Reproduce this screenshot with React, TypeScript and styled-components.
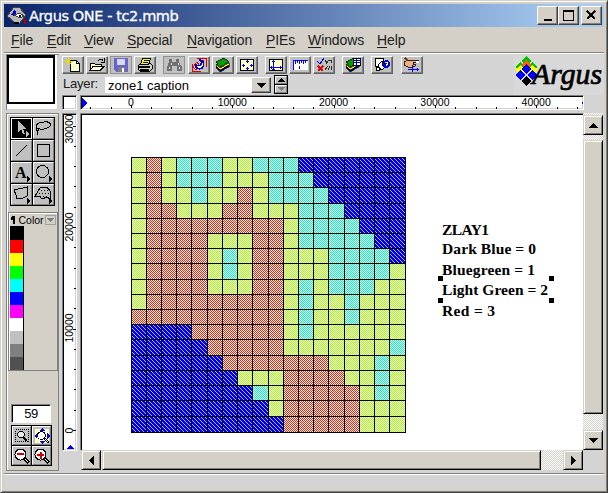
import React from 'react';
import styled, { createGlobalStyle, css } from 'styled-components';

const Global = createGlobalStyle`
  * { box-sizing: border-box; }
  body { margin: 0; background: #d4d0c8; font-family: "Liberation Sans", Arial, sans-serif; color: #000; overflow: hidden; }
  svg { display: block; shape-rendering: crispEdges; flex: none; }
`;

const raised = css`
  border: 1px solid;
  border-color: #fff #404040 #404040 #fff;
  box-shadow: inset -1px -1px #808080;
`;

const Frame = styled.div`
  width: 608px; height: 493px; background: #d4d0c8;
  border: 1px solid; border-color: #d4d0c8 #404040 #404040 #d4d0c8;
  box-shadow: inset 1px 1px #fff, inset -1px -1px #808080;
  padding: 3px; display: flex; flex-direction: column;
`;
const TitleBar = styled.div`
  height: 23px; flex: none; display: flex; align-items: center; padding: 0 2px 0 3px;
  background: linear-gradient(90deg, #0a246a, #a6caf0 94%);
`;
const Title = styled.span`
  flex: 1; margin-left: 2px; color: #fff; font: 14.5px "DejaVu Sans", sans-serif; line-height: 22px;
  letter-spacing: -0.4px; -webkit-text-stroke: 0.3px #fff; white-space: nowrap;
`;
const CaptionButton = styled.div<{ $gap?: number }>`
  ${raised} width: 21px; height: 19px; background: #d4d0c8; margin-left: ${p => p.$gap ?? 0}px;
  display: flex; align-items: center; justify-content: center;
`;
const MenuBar = styled.div`
  height: 25px; flex: none; font-size: 14px; line-height: 27px;
  display: flex; padding-left: 7px; gap: 14px;
`;
const MenuItem = styled.span<{ $w: number }>`
  width: ${p => p.$w}px; flex: none; white-space: nowrap; color: #202020; letter-spacing: -0.1px;
  u { text-underline-offset: 2px; }
`;
const Rule = styled.div`height: 2px; flex: none; background: #fff; border-top: 1px solid #808080;`;
const StatusBar = styled.div`flex: 1; background: #d4d4d4;`;
const Workspace = styled.div`height: 419px; flex: none; display: flex; background: #d4d4d4;`;
const SideColumn = styled.div`width: 58px; flex: none; padding-left: 2px;`;
const Preview = styled.div`
  width: 53px; height: 56px; background: #d4d0c8;
  border-left: 1px solid #808080; border-top: 1px solid #808080;
`;
const PreviewPaper = styled.div`width: 50px; height: 54px; background: #fff;`;
const PreviewPage = styled.div`width: 48px; height: 49px; border: 2px solid #000; border-top-width: 3px; background: #fff;`;
const SidePanel = styled.div`
  width: 53px; height: 358px; margin-top: 3px; background: #d4d0c8;
  border: 1px solid #808080; box-shadow: inset 1px 1px #fff;
  display: flex; flex-direction: column; align-items: flex-start; padding: 3px 0 0 3px;
`;
const ButtonGrid = styled.div<{ $cell: number; $top?: number; $left?: number }>`
  display: grid; grid-template-columns: repeat(2, ${p => p.$cell}px); grid-auto-rows: ${p => p.$cell}px;
  gap: 1px; padding: 1px; background: #000; margin: ${p => p.$top ?? 0}px 0 0 ${p => p.$left ?? 0}px;
`;
const Tool = styled.div<{ $on?: boolean }>`
  background: ${p => (p.$on ? '#000' : '#c0c0c0')}; overflow: hidden;
  border: 1px solid; border-color: ${p => (p.$on ? '#fff' : '#fff #808080 #808080 #fff')};
  display: flex; align-items: center; justify-content: center;
`;
const ColorPanel = styled.div`
  width: 50px; height: 159px; margin: 6px 0 0 -2px; border: 1px solid #808080; box-shadow: inset 1px 1px #fff;
  padding: 1px;
`;
const ColorHead = styled.div`
  height: 12px; display: flex; align-items: center; justify-content: space-between;
  font-size: 10.5px; line-height: 11px; padding-left: 1px;
`;
const Arrow = styled.div`
  width: 11px; height: 10px; background: #d4d0c8; border: 1px solid #a0a0a0; display: flex; align-items: center; justify-content: center;
`;
const Swatches = styled.div`width: 14px; border-right: 1px solid #000; border-top: 1px solid #000;`;
const Swatch = styled.div<{ $c: string }>`height: 13px; background: ${p => p.$c};`;
const ZoomValue = styled.div`
  width: 40px; height: 19px; margin: 33px 0 0 1px; background: #fff; border: 1px solid;
  border-color: #808080 #fff #fff #808080; box-shadow: inset 1px 1px #000;
  font-size: 13px; line-height: 18px; text-align: center; letter-spacing: -0.5px;
`;
const Main = styled.div`width: 542px; flex: none; display: flex; flex-direction: column;`;
const Top = styled.div`display: flex; height: 41px; flex: none;`;
const Controls = styled.div`width: 451px; flex: none;`;
const Toolbar = styled.div`display: flex; padding-top: 2px; height: 21px;`;
const TBtn = styled.div<{ $gap: number; $off?: boolean }>`
  width: 22px; height: 18px; margin-left: ${p => p.$gap}px; background: #c0c0c0;
  border: 1px solid; border-color: ${p => (p.$off ? '#909090' : '#fff #606060 #606060 #fff')};
  box-shadow: ${p => (p.$off ? 'none' : 'inset -1px -1px #808080')};
  display: flex; align-items: center; justify-content: center;
`;
const LayerRow = styled.div`display: flex; height: 20px; font-size: 13px;`;
const LayerLabel = styled.span`width: 43px; padding-left: 1px; line-height: 17px; letter-spacing: -0.2px; color: #202020;`;
const Combo = styled.div`
  width: 166px; height: 16px; margin-top: 2px; background: #fff; display: flex; justify-content: space-between;
  padding-left: 3px; line-height: 17px; letter-spacing: 0; white-space: nowrap;
`;
const DropButton = styled.div`
  ${raised} width: 20px; height: 16px; background: #d4d0c8; display: flex; align-items: center; justify-content: center;
`;
const Spinner = styled.div`
  width: 14px; height: 19px; margin-left: 3px; background: #000; padding: 1px; display: flex; flex-direction: column; gap: 1px;
`;
const SpinButton = styled.div`
  flex: 1; background: #c0c0c0; border: 1px solid; border-color: #fff #808080 #808080 #fff;
  display: flex; align-items: center; justify-content: center;
`;
const RulerRow = styled.div`display: flex; height: 18px; flex: none;`;
const Sunken = styled.div<{ $w: number; $h: number; $mr?: number }>`
  width: ${p => p.$w}px; height: ${p => p.$h}px; margin-right: ${p => p.$mr ?? 0}px; flex: none;
  background: #fff; border: 1px solid; border-color: #808080 #fff #fff #808080; box-shadow: inset 1px 1px #000, inset -1px -1px #d4d0c8;
  overflow: hidden;
`;
const Body = styled.div`display: flex;`;
const Center = styled.div`width: 503px; flex: none;`;
const Canvas = styled.div`
  width: 503px; height: 337px; background: #fff; border: 1px solid #808080; border-right: 0; border-bottom: 0;
  box-shadow: inset 1px 1px #000;
`;
const Track = styled.div<{ $v?: boolean }>`
  display: flex; flex-direction: ${p => (p.$v ? 'column' : 'row')};
  width: ${p => (p.$v ? 20 : 502)}px; height: ${p => (p.$v ? 337 : 20)}px;
  margin: ${p => (p.$v ? '0' : '0 0 0 1px')}; padding: ${p => (p.$v ? '2px 0 0' : '0')};
  background: repeating-conic-gradient(#fff 0 25%, #d4d0c8 0 50%) 0 0 / 2px 2px;
`;
const ScrollButton = styled.div`
  width: 20px; height: 20px; flex: none; background: #d4d0c8; border: 1px solid; border-color: #d4d0c8 #000 #000 #d4d0c8;
  box-shadow: inset 1px 1px #fff, inset -1px -1px #808080; display: flex; align-items: center; justify-content: center;
`;
const Thumb = styled(ScrollButton)<{ $w?: number; $h?: number; $lead: number; $tail: number; $v?: boolean }>`
  width: ${p => p.$w ?? 20}px; height: ${p => p.$h ?? 20}px;
  margin: ${p => (p.$v ? `${p.$lead}px 0 ${p.$tail}px` : `0 ${p.$tail}px 0 ${p.$lead}px`)};
`;

const Tri = ({ d, w = 9, h = 5, c = '#000' }: { d: string; w?: number; h?: number; c?: string }) => (
  <svg width={w} height={h}><path d={d} fill={c} /></svg>
);
const DOWN = 'M0 0h9v1h-1v1h-1v1h-1v1h-1v1h-1v-1h-1v-1h-1v-1h-1v-1h-1z';
const UP = 'M4 0h1v1h1v1h1v1h1v1h1v1h-9v-1h1v-1h1v-1h1v-1h1z';

const Books = () => (
  <>
    <path d="M1 9l4 4 9-5v2l-9 5-4-4z" fill="#000080" stroke="#000" strokeWidth=".6" />
    <path d="M1 7l4 4 9-5v2l-9 5-4-4z" fill="#ff0" stroke="#000" strokeWidth=".6" />
    <path d="M1 5l8-4 5 4-9 5z" fill="#00a000" stroke="#000" strokeWidth=".8" />
  </>
);
const Board = () => <path d="M1.5 2.5h13v11h-13z" fill="#ffffc8" stroke="#000" />;
const icons: Record<string, React.ReactNode> = {
  new: <><path d="M5.5 3.5h6l3 3v8h-9z" fill="#ffffd0" stroke="#000" /><path d="M11.5 3.5v3h3" fill="none" stroke="#000" /><path d="M3.5 0v8M0 4.5h8M1 2l5 5M6 2L1 7" stroke="#e8e000" /></>,
  open: <><path d="M1.5 13.5v-7h4l1 1h6v2" fill="#ffffd0" stroke="#000" /><path d="M1 13.5l3-4h11l-4 4z" fill="#ffffd0" stroke="#000" /><path d="M9 4c2-3 4-2 5 0M15.5 1v4h-4" fill="none" stroke="#000" /></>,
  save: <><path d="M1 1h14v14H3l-2-2z" fill="#6464d0" /><path d="M4 2h8v6H4z" fill="#d8d8f0" /><path d="M5 10h7v5H5z" fill="#808080" /><path d="M9 11h2v4h-2z" fill="#fff" /></>,
  print: <><path d="M1.5 8.5l3-2h9l2 2v3l-3 3h-9l-2-2z" fill="#d0d0d0" stroke="#000" /><path d="M5.5 1.5h8l-2 6h-8z" fill="#ff0" stroke="#000" /><path d="M7 3.5h5M6 5.5h5" stroke="#0000c0" /><path d="M2 10h11M3 13h9" stroke="#000" strokeWidth="2" /><path d="M9 11h3" stroke="#ff0" /></>,
  find: <><path d="M3 2h3v3h4V2h3v3l3 5v4h-5V9H6v5H1v-4l2-5z" fill="#707070" /><path d="M5 6v2M12 6v2M3 10v2M13 10v2" stroke="#e0e0e0" /></>,
  link: <><path d="M6 1.5h9v8M1.5 7v7h8" fill="none" stroke="#e00000" /><path d="M2 10l4-5 3 4-4 4zM8 3l5 1-1 6" fill="#fff" stroke="#e00000" /><path d="M5 8c-1 3 3 5 6 3 3-3 2-7-2-8 3 4 1 7-4 5z" fill="#fff" stroke="#0000c0" strokeWidth="1.5" /></>,
  books: <Books />,
  fit: <><Board /><path d="M8.5 3v3M8.5 10v3M3 8.5h3M11 8.5h3M7 4.5h3M7 11.5h3M4.5 7v3M12.5 7v3" stroke="#00f" /></>,
  axes: <><Board /><path d="M5.5 3v10M2 10.5h12M4 4.5h3M4 12.5h3M3.5 9v3M12.5 9v3" stroke="#00f" /></>,
  scale: <><path d="M1 3h15v10H1z" fill="#fff" /><path d="M1 3.5h15M3.5 4v3M5.5 4v2M7.5 4v3M9.5 4v2M11.5 4v3M13.5 4v2M1.5 4v9M7.5 9v3" stroke="#00f" /></>,
  check: <><path d="M1 4l3 3 4-6" fill="none" stroke="#0000d0" /><path d="M2 9l5 5M7 9l-5 5" stroke="#e00000" strokeWidth="1.5" /><path d="M9 3l2 3M13 3l-3 4M13 3h2v3M9 13l3-4M12 13l2-4M15 9v4" fill="none" stroke="#303030" /></>,
  layers: <><Books /><path d="M8.5 1.5h7v7h-7z" fill="#fff" stroke="#000" /><path d="M8 3.5h8M8 5.5h8M11.5 2v7" stroke="#00a" /></>,
  query: <><path d="M1.5 1.5h8v8h-8z" fill="#fff" stroke="#000" /><path d="M4 8l4-4 4 6-5 3z" fill="#fff" stroke="#000" /><path d="M8 6l3-3h3l2 3v3l-3 2h-3l-2-2z" fill="#0000d0" /><path d="M11 5h2v2h-1v2" stroke="#fff" fill="none" /><circle cx="4" cy="12" r="2" fill="#fff" stroke="#000" /></>,
  point: <><path d="M0 5l4-2h10v2H9v2h2v2H9v1H4L0 8z" fill="#f0b080" stroke="#000" strokeWidth=".8" /><path d="M8.5 8v7M4 12.5h11M13.5 11v3" stroke="#00f" /><path d="M1 1l3 3" stroke="#704000" strokeWidth="2" /><path d="M12 4h3v2h-3z" fill="#fff" /></>,
};
const toolbar: [string, number, boolean?][] = [
  ['new', 0], ['open', 2], ['save', 2, true], ['print', 2], ['find', 7, true], ['link', 3], ['books', 2], ['fit', 2],
  ['axes', 7], ['scale', 2], ['check', 2], ['layers', 7], ['query', 7], ['point', 8],
];
const Corner = () => <path d="M15 13v6l3-3z" />;
const tools = [
  <><path d="M6 2v11l3-3 2 5h2l-2-5h3z" fill="#c0c0c0" /><path d="M14 12v6l4-3z" fill="#c0c0c0" /></>,
  <><path d="M3 9c-2-4 2-6 7-6 8-1 8 4 3 6-4 2-8 1-10 0-2 2 2 4 2 2-1-2-3-1-2 1v4" fill="none" stroke="#000" /></>,
  <path d="M4 15L15 4" stroke="#000" />,
  <path d="M3.5 3.5h12v12h-12z" fill="none" stroke="#000" />,
  <><text x="3" y="15" fontSize="16" fontWeight="bold" fontFamily="Liberation Serif">A</text><Corner /></>,
  <><circle cx="8.5" cy="8.5" r="6" fill="none" stroke="#000" /><Corner /></>,
  <><path d="M2 5l13-3v9l-4 2-7 1v-4z" fill="none" stroke="#000" /><Corner /></>,
  <><path d="M1 11l5-8 7-1 3 4v8l-3-2-5 2-3-3z" fill="none" stroke="#000" /><path d="M7 5.5h8M5 8.5h10M6 11.5h9" stroke="#000" strokeDasharray="1 2" /><Corner /></>,
];
const Lens = ({ sign }: { sign: string }) => (
  <><path d="M11 11l5 5" stroke="#000" strokeWidth="3" /><path d="M11 11l4 4" stroke="#fff" /><circle cx="7.5" cy="7.5" r="5.5" fill="#fff" stroke="#000" /><path d={sign} stroke="#d00000" strokeWidth="2" /></>
);
const zooms = [
  <><path d="M2.5 2.5h13v12h-13z" fill="none" stroke="#000" strokeDasharray="1 1" /><circle cx="8" cy="7.5" r="3.2" fill="#e8e8e8" stroke="#000" /><path d="M10 10l4 4" stroke="#000" strokeWidth="2" /></>,
  <><path d="M2 2h14v14H2z" fill="#ffffc8" /><path d="M9 1l3 3H6zM9 17l3-3H6zM1 9l3-3v6zM17 9l-3-3v6z" fill="#00f" /><circle cx="8.5" cy="8.5" r="4" fill="#fff" stroke="#000" /><path d="M11 11l5 5" stroke="#000" strokeWidth="2.5" /><path d="M12 12l3 3" stroke="#fff" /></>,
  <Lens sign="M4 7h7" />,
  <Lens sign="M4 8h7M8 4.5v7" />,
];
const palette = ['#000', '#f00', '#ff0', '#0f0', '#0ff', '#00f', '#f0f', '#fff', '#c0c0c0', '#808080', '#505050'];

const rows = [
  'GRGTTTGGTTTBBBBBBB', 'GRGTTTGGGTTTBBBBBB', 'GRGGTGGRGTTTTBBBBB', 'GRRGGGRRGGGTTTBBBB',
  'GRRRRRRRRRGTTTTBBB', 'GRRRRGGGRRGTTTTTBB', 'GRRRRGTGRRGGGTTTTB', 'GRRRRGTGRRGGGTTTTG',
  'GRRRRGGGRRGTGTTTGG', 'GRRRRRRRRRGTGGTGGG', 'RRRRRRRRRRGTGGTGGG', 'BBBBRRRRRRGTGGGGGG',
  'BBBBBRRRRRGGGGGGGT', 'BBBBBBRRRRRRRGGGTG', 'BBBBBBBGGGRRRRGGTG', 'BBBBBBBBTGRRRRRGTG',
  'BBBBBBBBBGRRRRRGGG', 'BBBBBBBBBBRRRRRGGG',
];
const colEdges = [131, 146, 161, 176, 191, 207, 222, 237, 252, 268, 283, 298, 313, 328, 344, 359, 374, 389, 405];
const rowEdges = [157, 172, 187, 203, 218, 233, 248, 263, 279, 294, 309, 324, 339, 355, 370, 385, 400, 416, 432];
const zones: Record<string, string> = { G: '#a0ff00', R: '#ff2000', T: '#00ffb0' };
const captions: [string, number, number][] = [
  ['ZLAY1', 235, 47], ['Dark Blue = 0', 254, 94], ['Bluegreen = 1', 275, 93], ['Light Green = 2', 295, 106], ['Red = 3', 316, 53],
];

// The drawing uses window coordinates, so the view box starts at the canvas corner.
const Drawing = () => (
  <svg width="502" height="335" viewBox="81 114 502 335">
    <defs>
      {Object.entries(zones).map(([k, c]) => (
        <pattern key={k} id={`z${k}`} width="2" height="2" patternUnits="userSpaceOnUse">
          <path d="M0 0h2v2h-2z" fill="#fff" /><path d="M0 0h1v1h-1zM1 1h1v1h-1z" fill={c} />
        </pattern>
      ))}
      <pattern id="zB" width="4" height="4" patternUnits="userSpaceOnUse">
        <path d="M0 0h4v4h-4z" fill="#0000e8" />
        <path d="M0 0h1v1h-1zM1 1h1v1h-1zM2 2h1v1h-1zM3 3h1v1h-1z" fill="#b8b8ff" />
      </pattern>
    </defs>
    {rows.map((r, y) => [...r].map((z, x) => (
      <rect key={`${x}-${y}`} x={colEdges[x]} y={rowEdges[y]} width={colEdges[x + 1] - colEdges[x]} height={rowEdges[y + 1] - rowEdges[y]} fill={`url(#z${z})`} />
    )))}
    {colEdges.map(x => <rect key={x} x={x} y="157" width="1" height="276" />)}
    {rowEdges.map(y => <rect key={y} x="131" y={y} width="275" height="1" />)}
    <g fontFamily="Liberation Serif, serif" fontSize="15.5" fontWeight="bold">
      {captions.map(([t, y, w]) => <text key={t} x="442" y={y} textLength={w}>{t}</text>)}
    </g>
    {[438, 549].map(x => [276, 298].map(y => <rect key={`${x}${y}`} x={x} y={y} width="5" height="5" />))}
  </svg>
);

const rulerFont = { fontFamily: 'Liberation Sans, sans-serif', fontSize: 10.5 };
const HRuler = () => (
  <svg width="502" height="13" viewBox="81 96 502 13">
    <path d="M82 98l5.5 5-5.5 5zM583 101l-2 2 2 2z" fill="#00f" />
    {Array.from({ length: 25 }, (_, i) => {
      const major = (i - 2) % 5 === 0;
      return <rect key={i} x={Math.round(90.3 + i * 20.28)} y={major ? 105 : 107} width="1" height={major ? 3 : 2} />;
    })}
    {[0, 1, 2, 3, 4].map(i => <text key={i} {...rulerFont} x={131 + i * 101.3} y="106" textAnchor="middle">{i ? i * 10000 : 0}</text>)}
  </svg>
);
const VRuler = () => (
  <svg width="13" height="336" viewBox="63 115 13 336">
    <path d="M67 450l3.5-4 3.5 4z" fill="#00f" />
    {Array.from({ length: 16 }, (_, i) => <rect key={i} x={i % 5 ? 74 : 73} y={Math.round(431 - i * 20.3)} width="3" height="1" />)}
    {[0, 1, 2, 3].map(i => <text key={i} {...rulerFont} textAnchor="middle" transform={`translate(73 ${[431.5, 329, 228, 130][i]}) rotate(-90)`}>{i ? i * 10000 : 0}</text>)}
  </svg>
);

const diamonds: [number, number, string][] = [
  [12, 6, '#00c000'], [6, 12, '#00c000'], [18, 12, '#00c000'], [12, 10, '#ff6000'], [6, 15, '#ff0'], [18, 15, '#ff0'],
  [12, 14, '#0000ff'], [6, 20, '#0000ff'], [18, 20, '#0000ff'], [12, 26, '#000'],
];
const Logo = () => (
  <svg width="90" height="40">
    <rect width="90" height="40" fill="#d8d8d8" />
    {diamonds.map(([x, y, c], i) => <path key={i} d={`M${x} ${y - 5}l5 5-5 5-5-5z`} fill={c} />)}
    <text x="18" y="29" fontFamily="Liberation Serif, serif" fontStyle="italic" fontSize="29" stroke="#000" strokeWidth=".7" textLength="70" lengthAdjust="spacingAndGlyphs">Argus</text>
  </svg>
);
const LogoBox = styled.div`padding-top: 1px; margin-left: 1px;`;

const menus: [string, number][] = [['File', 22], ['Edit', 23], ['View', 29], ['Special', 46], ['Navigation', 65], ['PIEs', 28], ['Windows', 55], ['Help', 29]];

export default function App() {
  return (
    <Frame>
      <Global />
      <TitleBar>
        <svg width="20" height="20">
          <path d="M7 1h5l7 8-7 9-5-2-7-6z" fill="#b8b8b8" stroke="#404040" />
          <path d="M4 9l4-6 2 8z" fill="#0000d0" /><path d="M7 9l6-2 4 3-4 2z" fill="#fff" stroke="#404040" />
          <circle cx="13" cy="10" r="1.5" /><path d="M17 13h2v5h-2z" fill="#b00000" /><path d="M6 16h6v2H7z" />
        </svg>
        <Title>Argus ONE - tc2.mmb</Title>
        <CaptionButton><svg width="14" height="13"><path d="M3 10h8v2H3z" /></svg></CaptionButton>
        <CaptionButton><svg width="13" height="13"><path d="M1 1h11v11H1zM2 3v8h9V3z" fillRule="evenodd" /></svg></CaptionButton>
        <CaptionButton $gap={2}><svg width="11" height="11"><path d="M1 1l8 8M9 1l-8 8" stroke="#000" strokeWidth="2" /></svg></CaptionButton>
      </TitleBar>
      <MenuBar>{menus.map(([m, w]) => <MenuItem key={m} $w={w}><u>{m[0]}</u>{m.slice(1)}</MenuItem>)}</MenuBar>
      <Rule />
      <Workspace>
        <SideColumn>
          <Preview><PreviewPaper><PreviewPage /></PreviewPaper></Preview>
          <SidePanel>
            <ButtonGrid $cell={21}>{tools.map((t, i) => <Tool key={i} $on={i === 0}><svg width="19" height="19">{t}</svg></Tool>)}</ButtonGrid>
            <ColorPanel>
              <ColorHead>
                <svg width="6" height="8"><path d="M1 0h3v8h-2V4H0V1z" /></svg>Color
                <Arrow><Tri w={7} h={4} d="M0 0h7l-3.5 4z" c="#808080" /></Arrow>
              </ColorHead>
              <Swatches>{palette.map(c => <Swatch key={c} $c={c} />)}</Swatches>
            </ColorPanel>
            <ZoomValue>59</ZoomValue>
            <ButtonGrid $cell={19} $top={2} $left={1}>{zooms.map((z, i) => <Tool key={i}><svg width="17" height="17">{z}</svg></Tool>)}</ButtonGrid>
          </SidePanel>
        </SideColumn>
        <Main>
          <Top>
            <Controls>
              <Toolbar>
                {toolbar.map(([n, g, off]) => <TBtn key={n} $gap={g} $off={off}><svg width="17" height="16">{icons[n]}</svg></TBtn>)}
              </Toolbar>
              <LayerRow>
                <LayerLabel>Layer:</LayerLabel>
                <Combo>zone1 caption<DropButton><Tri d={DOWN} /></DropButton></Combo>
                <Spinner>
                  <SpinButton><Tri w={7} h={4} d="M0 4h7L3.5 0z" /></SpinButton>
                  <SpinButton><Tri w={7} h={4} d="M0 0h7L3.5 4z" c="#808080" /></SpinButton>
                </Spinner>
              </LayerRow>
            </Controls>
            <LogoBox><Logo /></LogoBox>
          </Top>
          <RulerRow>
            <Sunken $w={15} $h={15} $mr={3} />
            <Sunken $w={504} $h={15}><HRuler /></Sunken>
          </RulerRow>
          <Body>
            <Sunken $w={15} $h={338} $mr={3}><VRuler /></Sunken>
            <Center>
              <Canvas><Drawing /></Canvas>
              <Track>
                <ScrollButton><Tri w={5} h={9} d="M5 0v9L0 4.5z" /></ScrollButton>
                <Thumb $w={439} $lead={1} $tail={22} />
                <ScrollButton><Tri w={5} h={9} d="M0 0v9l5-4.5z" /></ScrollButton>
              </Track>
            </Center>
            <Track $v>
              <ScrollButton><Tri d={UP} /></ScrollButton>
              <Thumb $v $h={274} $lead={5} $tail={16} />
              <ScrollButton><Tri d={DOWN} /></ScrollButton>
            </Track>
          </Body>
        </Main>
      </Workspace>
      <Rule />
      <StatusBar />
    </Frame>
  );
}
